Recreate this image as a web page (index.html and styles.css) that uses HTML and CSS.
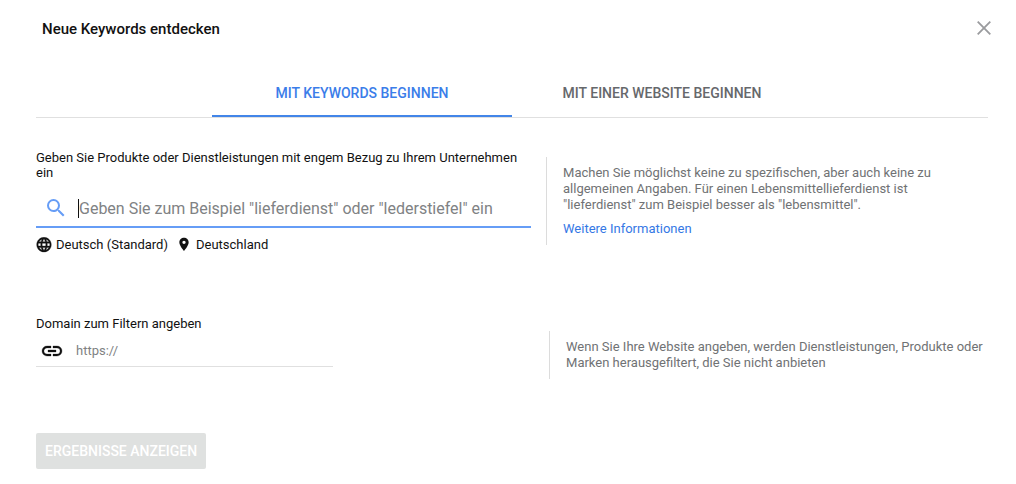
FILE: index.html
```html
<!DOCTYPE html>
<html lang="de">
<head>
<meta charset="utf-8">
<meta name="viewport" content="width=device-width, initial-scale=1">
<title>Neue Keywords entdecken</title>
<link rel="stylesheet" href="styles.css">
</head>
<body>
<main class="panel">
  <header class="header">
    <h1 class="title">Neue Keywords entdecken</h1>
    <button class="close" type="button" aria-label="Schließen">
      <svg width="14" height="14" viewBox="0 0 14 14" fill="none" stroke="#9a9b9e" stroke-width="1.8"><path d="M.7.7l12.6 12.6M13.3.7L.7 13.3"/></svg>
    </button>
  </header>
  <div class="tabs" role="tablist">
    <button class="tab tab-active" type="button" role="tab" aria-selected="true">MIT KEYWORDS BEGINNEN</button>
    <button class="tab" type="button" role="tab" aria-selected="false">MIT EINER WEBSITE BEGINNEN</button>
  </div>
  <form class="form">
    <section class="row">
      <div class="keywords">
        <label class="label" for="keywords">Geben Sie Produkte oder Dienstleistungen mit engem Bezug zu Ihrem Unternehmen ein</label>
        <div class="search">
          <svg class="search-icon" width="24" height="24" viewBox="0 0 24 24" fill="#669df6"><path d="M15.5 14h-.79l-.28-.27A6.471 6.471 0 0 0 16 9.5 6.5 6.5 0 1 0 9.5 16c1.61 0 3.09-.59 4.23-1.57l.27.28v.79l5 4.99L20.49 19l-4.99-5zm-6 0C7.01 14 5 11.99 5 9.5S7.01 5 9.5 5 14 7.01 14 9.5 11.99 14 9.5 14z"/></svg>
          <span class="caret"></span>
          <input class="search-input" id="keywords" type="text" placeholder="Geben Sie zum Beispiel &quot;lieferdienst&quot; oder &quot;lederstiefel&quot; ein">
        </div>
        <div class="targets">
          <button class="target" type="button">
            <svg width="16" height="16" viewBox="1 1.5 22 22" fill="#111" stroke="#111" stroke-width=".5"><path d="M11.99 2C6.47 2 2 6.48 2 12s4.47 10 9.99 10C17.52 22 22 17.52 22 12S17.52 2 11.99 2zm6.93 6h-2.95a15.65 15.65 0 0 0-1.38-3.56A8.03 8.03 0 0 1 18.92 8zM12 4.04c.83 1.2 1.48 2.53 1.91 3.96h-3.82c.43-1.43 1.08-2.76 1.91-3.96zM4.26 14C4.1 13.36 4 12.69 4 12s.1-1.36.26-2h3.38c-.08.66-.14 1.32-.14 2s.06 1.34.14 2H4.26zm.82 2h2.95c.32 1.25.78 2.45 1.38 3.56A7.987 7.987 0 0 1 5.08 16zm2.95-8H5.08a7.987 7.987 0 0 1 4.33-3.56A15.65 15.65 0 0 0 8.03 8zM12 19.96c-.83-1.2-1.48-2.53-1.91-3.96h3.82c-.43 1.43-1.08 2.76-1.91 3.96zM14.34 14H9.66c-.09-.66-.16-1.32-.16-2s.07-1.35.16-2h4.68c.09.65.16 1.32.16 2s-.07 1.34-.16 2zm.25 5.56c.6-1.11 1.06-2.31 1.38-3.56h2.95a8.03 8.03 0 0 1-4.33 3.56zM16.36 14c.08-.66.14-1.32.14-2s-.06-1.34-.14-2h3.38c.16.64.26 1.31.26 2s-.1 1.36-.26 2h-3.38z"/></svg>
            Deutsch (Standard)
          </button>
          <button class="target" type="button">
            <svg width="16" height="16" viewBox="0 1 24 24" fill="#111"><path d="M12 2C8.13 2 5 5.13 5 9c0 5.25 7 13 7 13s7-7.75 7-13c0-3.87-3.13-7-7-7zm0 9.5a2.5 2.5 0 0 1 0-5 2.5 2.5 0 0 1 0 5z"/></svg>
            Deutschland
          </button>
        </div>
      </div>
      <aside class="help">
        <p class="help-text">Machen Sie möglichst keine zu spezifischen, aber auch keine zu allgemeinen Angaben. Für einen Lebensmittellieferdienst ist "lieferdienst" zum Beispiel besser als "lebensmittel".</p>
        <a class="help-link" href="#">Weitere Informationen</a>
      </aside>
    </section>
    <section class="row row-domain">
      <div class="domain">
        <label class="label" for="domain">Domain zum Filtern angeben</label>
        <div class="domain-field">
          <svg width="24" height="24" viewBox="0 0 24 24" fill="#111" stroke="#111" stroke-width=".3"><path d="M3.9 12c0-1.71 1.39-3.1 3.1-3.1h4V7H7a5 5 0 0 0 0 10h4v-1.9H7c-1.71 0-3.1-1.39-3.1-3.1zM8 13h8v-2H8v2zm9-6h-4v1.9h4a3.1 3.1 0 0 1 0 6.2h-4V17h4a5 5 0 0 0 0-10z"/></svg>
          <input class="domain-input" id="domain" type="text" placeholder="https://">
        </div>
      </div>
      <aside class="help help-domain">
        <p class="help-text">Wenn Sie Ihre Website angeben, werden Dienstleistungen, Produkte oder Marken herausgefiltert, die Sie nicht anbieten</p>
      </aside>
    </section>
    <button class="submit" type="submit" disabled>ERGEBNISSE ANZEIGEN</button>
  </form>
</main>
</body>
</html>
```
FILE: styles.css
```css
* { box-sizing: border-box; }
body { margin: 0; background: #fff; color: #111; font: 13px/16px Roboto, sans-serif; }
button, input { margin: 0; padding: 0; border: 0; background: transparent; color: inherit; font: inherit; outline: 0; }
button { cursor: pointer; }
svg { display: block; flex: none; }
p { margin: 0; }

.panel { padding: 16px 28px 12px 36px; }
.header { display: flex; align-items: center; justify-content: space-between; height: 24px; padding-left: 6px; }
.title { margin: 0; padding-top: 2px; font-size: 15px; line-height: 24px; font-weight: 500; }
.close { display: grid; place-items: center; width: 24px; height: 24px; margin-right: -8px; }

.tabs { display: flex; justify-content: center; margin-top: 30px; border-bottom: 1px solid #e0e0e0; }
.tab { width: 300px; height: 47px; color: #66686b; font-size: 14px; font-weight: 500; border-bottom: 2px solid transparent; }
.tab-active { color: #3b7de9; border-bottom-color: #4285e8; }

.row { display: grid; grid-template-columns: 52% 1fr; column-gap: 15px; margin-top: 32px; }
.label { display: block; line-height: 15px; }

.search { display: flex; align-items: center; height: 40px; margin-top: 8px; padding: 2px 0 0 8px; border-bottom: 2px solid #669df6; }
.caret { width: 1px; height: 19px; margin-left: 10px; background: #111; }
.search-input { flex: 1; min-width: 0; height: 24px; font-size: 16px; }
::placeholder { color: #808284; opacity: 1; }
.targets { display: flex; gap: 8px; margin-top: 8px; }
.target { display: flex; align-items: center; gap: 4px; line-height: 18px; }

.help { align-self: start; margin-top: 7px; padding: 8px 40px 8px 16px; border-left: 1px solid #dcdcdc; color: #707274; }
.help-link { display: inline-block; margin-top: 8px; color: #3578e5; text-decoration: none; }

.row-domain { column-gap: 18px; margin-top: 62px; }
.domain { width: 60%; }
.domain-field { display: flex; align-items: center; gap: 12px; height: 32px; margin-top: 4px; padding-left: 4px; border-bottom: 1px solid #e0e0e0; }
.domain-input { flex: 1; min-width: 0; }
.help-domain { margin-top: 15px; padding-right: 4px; }
.submit { height: 36px; margin-top: 54px; padding: 0 9px; border-radius: 2px; background: #dfe1e0; color: #fff; font-size: 14px; font-weight: 500; cursor: default; }
```
